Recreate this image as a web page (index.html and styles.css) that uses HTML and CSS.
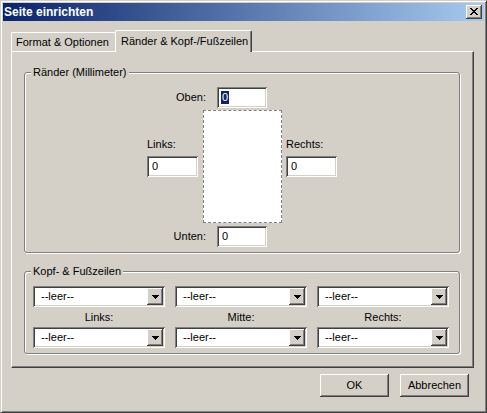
FILE: index.html
```html
<!DOCTYPE html>
<html lang="de">
<head>
<meta charset="utf-8">
<title>Seite einrichten</title>
<link rel="stylesheet" href="styles.css">
</head>
<body>
<div class="window">
  <div class="titlebar">
    <span class="title">Seite einrichten</span>
    <span class="close"><svg width="8" height="7" viewBox="0 0 8 7" shape-rendering="crispEdges"><path fill="#000" d="M0 0h2v1H0z M6 0h2v1H6z M1 1h2v1H1z M5 1h2v1H5z M2 2h4v1H2z M3 3h2v1H3z M2 4h4v1H2z M1 5h2v1H1z M5 5h2v1H5z M0 6h2v1H0z M6 6h2v1H6z"/></svg></span>
  </div>
  <div class="tabs">
    <div class="tab">Format &amp; Optionen</div>
    <div class="tab active">Ränder &amp; Kopf-/Fußzeilen</div>
  </div>
  <div class="panel">
    <div class="group margins">
      <div class="group-title">Ränder (Millimeter)</div>
      <div class="row row-top">
        <span class="lbl-right">Oben:</span>
        <div class="field"><span class="val sel">0</span></div>
      </div>
      <div class="row row-mid">
        <div class="side"><span class="lbl">Links:</span><div class="field"><span class="val">0</span></div></div>
        <div class="preview"></div>
        <div class="side"><span class="lbl">Rechts:</span><div class="field"><span class="val">0</span></div></div>
      </div>
      <div class="row row-bottom">
        <span class="lbl-right">Unten:</span>
        <div class="field"><span class="val">0</span></div>
      </div>
    </div>
    <div class="group hf">
      <div class="group-title">Kopf- &amp; Fußzeilen</div>
      <div class="combos">
        <div class="combo"><span class="combo-text">--leer--</span><span class="drop"><svg width="7" height="4" viewBox="0 0 7 4" shape-rendering="crispEdges"><path fill="#000" d="M0 0h7v1H0z M1 1h5v1H1z M2 2h3v1H2z M3 3h1v1H3z"/></svg></span></div>
        <div class="combo"><span class="combo-text">--leer--</span><span class="drop"><svg width="7" height="4" viewBox="0 0 7 4" shape-rendering="crispEdges"><path fill="#000" d="M0 0h7v1H0z M1 1h5v1H1z M2 2h3v1H2z M3 3h1v1H3z"/></svg></span></div>
        <div class="combo"><span class="combo-text">--leer--</span><span class="drop"><svg width="7" height="4" viewBox="0 0 7 4" shape-rendering="crispEdges"><path fill="#000" d="M0 0h7v1H0z M1 1h5v1H1z M2 2h3v1H2z M3 3h1v1H3z"/></svg></span></div>
        <div class="cap">Links:</div>
        <div class="cap">Mitte:</div>
        <div class="cap">Rechts:</div>
        <div class="combo"><span class="combo-text">--leer--</span><span class="drop"><svg width="7" height="4" viewBox="0 0 7 4" shape-rendering="crispEdges"><path fill="#000" d="M0 0h7v1H0z M1 1h5v1H1z M2 2h3v1H2z M3 3h1v1H3z"/></svg></span></div>
        <div class="combo"><span class="combo-text">--leer--</span><span class="drop"><svg width="7" height="4" viewBox="0 0 7 4" shape-rendering="crispEdges"><path fill="#000" d="M0 0h7v1H0z M1 1h5v1H1z M2 2h3v1H2z M3 3h1v1H3z"/></svg></span></div>
        <div class="combo"><span class="combo-text">--leer--</span><span class="drop"><svg width="7" height="4" viewBox="0 0 7 4" shape-rendering="crispEdges"><path fill="#000" d="M0 0h7v1H0z M1 1h5v1H1z M2 2h3v1H2z M3 3h1v1H3z"/></svg></span></div>
      </div>
    </div>
  </div>
  <div class="buttons">
    <button class="btn">OK</button>
    <button class="btn">Abbrechen</button>
  </div>
</div>
</body>
</html>
```

FILE: styles.css
```css
* { box-sizing: border-box; }
html, body { margin: 0; padding: 0; }
body {
  background: #d4d0c8;
  font-family: "Liberation Sans", Arial, sans-serif;
  font-size: 11px;
  line-height: 13px;
  color: #000;
}
.window {
  width: 487px;
  height: 413px;
  background: #d4d0c8;
  border: 1px solid;
  border-color: #d4d0c8 #404040 #404040 #d4d0c8;
  box-shadow: inset 1px 1px 0 #fff, inset -1px -1px 0 #808080;
  padding: 2px;
  display: flex;
  flex-direction: column;
}
.titlebar {
  height: 18px;
  flex: none;
  background: linear-gradient(to right, #0a246a, #a6caf0);
  display: flex;
  align-items: center;
  justify-content: space-between;
  padding: 0 2px 0 1px;
}
.title {
  color: #fff;
  font-weight: bold;
  font-size: 12px;
  line-height: 14px;
}
.close {
  width: 16px;
  height: 14px;
  background: #d4d0c8;
  box-shadow: inset -1px -1px 0 #404040, inset 1px 1px 0 #fff, inset -2px -2px 0 #808080;
  display: flex;
  align-items: center;
  justify-content: center;
  padding-bottom: 1px;
}
.close svg { display: block; }
.tabs {
  display: flex;
  align-items: flex-end;
  height: 22px;
  margin: 9px 0 0 8px;
  position: relative;
  z-index: 1;
  flex: none;
}
.tab {
  background: #d4d0c8;
  border-top: 1px solid #fff;
  border-left: 1px solid #fff;
  border-top-left-radius: 2px;
}
.tab:not(.active) {
  width: 104px;
  height: 19px;
  margin-bottom: 1px;
  padding: 3px 0 0 4px;
}
.tab.active {
  width: 137px;
  height: 22px;
  padding: 4px 0 0 5px;
  border-right: 1px solid #404040;
  border-top-right-radius: 2px;
  box-shadow: inset -1px 0 0 #808080;
}
.panel {
  flex: none;
  width: 463px;
  height: 317px;
  margin: -1px 0 0 8px;
  border: 1px solid;
  border-color: #fff #404040 #404040 #fff;
  box-shadow: inset -1px -1px 0 #808080;
  padding: 20px 13px 0 12px;
}
.group {
  border: 1px solid #808080;
  border-radius: 3px;
  box-shadow: 1px 1px 0 #fff, inset 1px 1px 0 #fff;
}
.group-title {
  width: fit-content;
  margin: -7px 0 0 6px;
  padding: 0 2px;
  background: #d4d0c8;
  line-height: 13px;
}
.hf { margin-top: 18px; }
.row { display: flex; }
.row-top {
  align-items: center;
  padding: 8px 0 0 121px;
}
.row-bottom {
  align-items: center;
  margin-top: 3px;
  padding: 0 0 5px 121px;
}
.lbl-right {
  width: 60px;
  margin-right: 11px;
  text-align: right;
}
.row-mid {
  margin-top: 2px;
  padding-left: 122px;
}
.side {
  width: 51px;
  margin-top: 28px;
  display: flex;
  flex-direction: column;
}
.lbl { margin-bottom: 5px; }
.preview {
  width: 79px;
  height: 113px;
  margin: 0 4px 0 5px;
  background: #fff;
  border: 1px dashed #808080;
}
.field {
  width: 50px;
  height: 21px;
  background: #fff;
  box-shadow: inset 1px 1px 0 #808080, inset -1px -1px 0 #fff, inset 2px 2px 0 #404040, inset -2px -2px 0 #d4d0c8;
  display: flex;
  align-items: center;
  padding-left: 4px;
}
.side .field { width: 51px; }
.val { padding: 0 1px; }
.sel { background: #0a246a; color: #fff; }
.combos {
  display: grid;
  grid-template-columns: repeat(3, 132px);
  column-gap: 10px;
  padding: 8px 10px 5px 8px;
}
.combo {
  height: 21px;
  background: #fff;
  box-shadow: inset 1px 1px 0 #808080, inset -1px -1px 0 #fff, inset 2px 2px 0 #404040, inset -2px -2px 0 #d4d0c8;
  padding: 2px;
  display: flex;
  align-items: center;
  justify-content: space-between;
}
.combo-text { padding-left: 6px; }
.drop {
  width: 16px;
  height: 17px;
  background: #d4d0c8;
  box-shadow: inset -1px -1px 0 #404040, inset 1px 1px 0 #fff, inset -2px -2px 0 #808080;
  display: flex;
  align-items: center;
  justify-content: center;
}
.drop svg { display: block; }
.cap {
  text-align: center;
  margin: 4px 0 3px;
}
.buttons {
  display: flex;
  justify-content: flex-end;
  gap: 11px;
  margin-top: 6px;
  padding-right: 15px;
  flex: none;
}
.btn {
  width: 69px;
  height: 23px;
  border: none;
  margin: 0;
  padding: 0;
  background: #d4d0c8;
  font: inherit;
  color: #000;
  box-shadow: inset -1px -1px 0 #404040, inset 1px 1px 0 #fff, inset -2px -2px 0 #808080;
}
```
